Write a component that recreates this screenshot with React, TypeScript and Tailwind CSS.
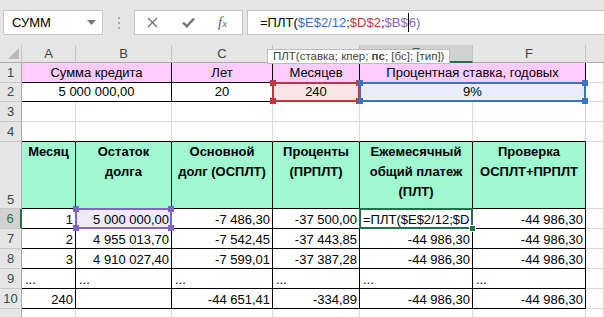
import React from "react";

type Al = "l" | "c" | "r";

function Cell({
  c = "",
  al = "r",
  v = "end",
  children,
  ov,
}: {
  c?: string;
  al?: Al;
  v?: "end" | "center";
  children?: React.ReactNode;
  ov?: React.ReactNode;
}) {
  const j =
    al === "l"
      ? "justify-start pl-[3px]"
      : al === "c"
      ? "justify-center"
      : "justify-end pr-[2px]";
  const va = v === "end" ? "items-end" : "items-center";
  return (
    <div className={`relative min-w-0 border-r border-b ${c}`}>
      <div className={`h-full w-full overflow-hidden whitespace-nowrap flex ${j} ${va} leading-[16px]`}>
        {children}
      </div>
      {ov}
    </div>
  );
}

function Box({ b, s, handles = true }: { b: string; s: string; handles?: boolean }) {
  return (
    <div className={`pointer-events-none absolute z-10 -left-[1px] -top-[1px] -right-[1px] -bottom-[1px] border-2 ${b}`}>
      {handles && (
        <>
          <span className={`absolute -left-[4px] -top-[4px] w-[6px] h-[6px] ${s}`} />
          <span className={`absolute -right-[4px] -top-[4px] w-[6px] h-[6px] ${s}`} />
          <span className={`absolute -left-[4px] -bottom-[4px] w-[6px] h-[6px] ${s}`} />
          <span className={`absolute -right-[4px] -bottom-[4px] w-[6px] h-[6px] ${s}`} />
        </>
      )}
    </div>
  );
}

function ActiveBox() {
  return (
    <div className="pointer-events-none absolute z-10 -left-[1px] -top-[1px] -right-[1px] -bottom-[1px] border-2 border-[#217346]">
      <span className="absolute -right-[5px] -bottom-[5px] w-[7px] h-[7px] bg-[#217346] border border-white" />
    </div>
  );
}

const CH = "bg-[#e6e6e6] text-[#444] border-r-[#c4c4c4] border-b-[#ababab]";
const RH = "bg-[#e6e6e6] text-[#444] border-r-[#ababab] border-b-[#c8c8c8]";
const GR = "border-[#d9d9d9]";
const BK = "border-black";
const PK = "bg-[#ffccff] border-black";
const MINT = "bg-[#a0f9d0]";

function ColHdr({ t, c = "" }: { t: string; c?: string }) {
  return (
    <Cell c={`${CH} ${c}`} al="c" v="center">
      {t}
    </Cell>
  );
}

function RowHdr({ t, c = "", v = "center" }: { t: string; c?: string; v?: "end" | "center" }) {
  return (
    <Cell c={`${RH} ${c}`} al="c" v={v}>
      {t}
    </Cell>
  );
}

function H5({ lines, c = "" }: { lines: string[]; c?: string }) {
  return (
    <div className={`relative min-w-0 border-r border-b border-black ${MINT} flex flex-col items-center font-bold leading-[20px] whitespace-nowrap overflow-hidden ${c}`}>
      {lines.map((l, i) => (
        <span key={i}>{l}</span>
      ))}
    </div>
  );
}

function Toolbar() {
  return (
    <div className="h-[45px] bg-[#e6e6e6] flex items-start pt-[10px]">
      <div className="ml-[3px] w-[100px] h-[25px] bg-white border border-[#c6c6c6] flex items-center pl-[8px] pr-[6px] text-[13px] text-black">
        <span className="flex-1">СУММ</span>
        <svg width="9" height="5" viewBox="0 0 9 5">
          <path d="M0 0 L9 0 L4.5 5 Z" fill="#777" />
        </svg>
      </div>
      <div className="w-[31px] h-[25px] flex flex-col items-center justify-center gap-[3px]">
        <span className="w-[2px] h-[2px] bg-[#a8a8a8]" />
        <span className="w-[2px] h-[2px] bg-[#a8a8a8]" />
        <span className="w-[2px] h-[2px] bg-[#a8a8a8]" />
      </div>
      <div className="w-[109px] h-[25px] bg-white border border-[#c6c6c6] flex items-center">
        <svg className="ml-[12px]" width="11" height="11" viewBox="0 0 11 11">
          <path d="M1 1 L10 10 M10 1 L1 10" stroke="#737373" strokeWidth="1.4" />
        </svg>
        <svg className="ml-[24px]" width="13" height="11" viewBox="0 0 13 11">
          <path d="M1 5.5 L4.8 9.3 L12 1.5" stroke="#737373" strokeWidth="2.4" fill="none" />
        </svg>
        <span className="ml-[23px] font-['Liberation_Serif',serif] italic text-[#666] text-[15px] leading-none">
          f<span className="text-[11px]">x</span>
        </span>
      </div>
      <div className="ml-[4px] flex-1 h-[25px] bg-white border border-r-0 border-[#c6c6c6] flex items-center pl-[12px] text-[13px] whitespace-nowrap">
        <span className="text-black">=ПЛТ(</span>
        <span className="text-[#3a6fc8]">$E$2/12</span>
        <span className="text-black">;</span>
        <span className="text-[#c8323f]">$D$2</span>
        <span className="text-black">;</span>
        <span className="text-[#8563c4]">$B$</span>
        <span className="inline-block w-px h-[19px] bg-black" />
        <span className="text-[#8563c4]">6)</span>
      </div>
    </div>
  );
}

function Sheet() {
  return (
    <div className="grid grid-cols-[22px_54px_96px_101px_87px_113px_113px_1fr] grid-rows-[18px_20px_19px_20px_20px_67px_20px_20px_20px_20px_20px_20px] text-[13px] text-black">
      {/* header row */}
      <div className={`relative border-r border-b ${CH}`}>
        <svg className="absolute right-[2px] bottom-[3px]" width="11" height="11" viewBox="0 0 11 11">
          <path d="M11 0 L11 11 L0 11 Z" fill="#b9b9b9" />
        </svg>
      </div>
      <ColHdr t="A" />
      <ColHdr t="B" />
      <ColHdr t="C" />
      <ColHdr t="D" />
      <ColHdr t="E" c="!bg-[#d2d2d2] !text-[#217346] border-b-2 !border-b-[#217346]" />
      <ColHdr t="F" />
      <ColHdr t="" c="border-r-0" />

      {/* row 1 */}
      <RowHdr t="1" />
      <Cell c={`col-span-2 ${PK}`} al="c" v="center">Сумма кредита</Cell>
      <Cell c={PK} al="c" v="center">Лет</Cell>
      <Cell c={PK} al="c" v="center">Месяцев</Cell>
      <Cell c={`col-span-2 ${PK}`} al="c" v="center">Процентная ставка, годовых</Cell>
      <Cell c={GR} />

      {/* row 2 */}
      <RowHdr t="2" />
      <Cell c={`col-span-2 ${BK}`} al="c" v="center">5 000 000,00</Cell>
      <Cell c={BK} al="c" v="center">20</Cell>
      <Cell
        c={`${BK} bg-[#f9e6e7]`}
        al="c"
        v="center"
        ov={<Box b="border-[#c4353f]" s="bg-[#c4353f]" />}
      >
        240
      </Cell>
      <Cell
        c={`col-span-2 ${BK} bg-[#e8eef9]`}
        al="c"
        v="center"
        ov={<Box b="border-[#3a72c8]" s="bg-[#3a72c8]" />}
      >
        9%
      </Cell>
      <Cell c={GR} />

      {/* row 3 */}
      <RowHdr t="3" />
      <Cell c={GR} />
      <Cell c={GR} />
      <Cell c={GR} />
      <Cell c={GR} />
      <Cell c={GR} />
      <Cell c={GR} />
      <Cell c={GR} />

      {/* row 4 */}
      <RowHdr t="4" />
      <Cell c="border-r-[#d9d9d9] border-b-black" />
      <Cell c="border-r-[#d9d9d9] border-b-black" />
      <Cell c="border-r-[#d9d9d9] border-b-black" />
      <Cell c="border-r-[#d9d9d9] border-b-black" />
      <Cell c="border-r-[#d9d9d9] border-b-black" />
      <Cell c="border-r-[#d9d9d9] border-b-black" />
      <Cell c={GR} />

      {/* row 5 */}
      <RowHdr t="5" v="end" />
      <H5 lines={["Месяц"]} />
      <H5 lines={["Остаток", "долга"]} />
      <H5 lines={["Основной", "долг (ОСПЛТ)"]} />
      <H5 lines={["Проценты", "(ПРПЛТ)"]} />
      <H5 lines={["Ежемесячный", "общий платеж", "(ПЛТ)"]} />
      <H5 lines={["Проверка", "ОСПЛТ+ПРПЛТ"]} />
      <Cell c={GR} />

      {/* row 6 */}
      <RowHdr t="6" c="!bg-[#d2d2d2] !text-[#217346] border-r-2 !border-r-[#217346]" />
      <Cell c={BK}>1</Cell>
      <Cell c={`${BK} bg-[#efeaf8]`} ov={<Box b="border-[#8563c4]" s="bg-[#8563c4]" />}>
        5 000 000,00
      </Cell>
      <Cell c={BK}>-7 486,30</Cell>
      <Cell c={BK}>-37 500,00</Cell>
      <Cell c={BK} al="l" ov={<ActiveBox />}>
        =ПЛТ($E$2/12;$D
      </Cell>
      <Cell c={BK}>-44 986,30</Cell>
      <Cell c={GR} />

      {/* row 7 */}
      <RowHdr t="7" />
      <Cell c={BK}>2</Cell>
      <Cell c={BK}>4 955 013,70</Cell>
      <Cell c={BK}>-7 542,45</Cell>
      <Cell c={BK}>-37 443,85</Cell>
      <Cell c={BK}>-44 986,30</Cell>
      <Cell c={BK}>-44 986,30</Cell>
      <Cell c={GR} />

      {/* row 8 */}
      <RowHdr t="8" />
      <Cell c={BK}>3</Cell>
      <Cell c={BK}>4 910 027,40</Cell>
      <Cell c={BK}>-7 599,01</Cell>
      <Cell c={BK}>-37 387,28</Cell>
      <Cell c={BK}>-44 986,30</Cell>
      <Cell c={BK}>-44 986,30</Cell>
      <Cell c={GR} />

      {/* row 9 */}
      <RowHdr t="9" />
      <Cell c={BK} al="l">...</Cell>
      <Cell c={BK} al="l">...</Cell>
      <Cell c={BK} al="l">...</Cell>
      <Cell c={BK} al="l">...</Cell>
      <Cell c={BK} al="l">...</Cell>
      <Cell c={BK} al="l">...</Cell>
      <Cell c={GR} />

      {/* row 10 */}
      <RowHdr t="10" />
      <Cell c={BK}>240</Cell>
      <Cell c={BK} />
      <Cell c={BK}>-44 651,41</Cell>
      <Cell c={BK}>-334,89</Cell>
      <Cell c={BK}>-44 986,30</Cell>
      <Cell c={BK}>-44 986,30</Cell>
      <Cell c={GR} />

      {/* row 11 */}
      <RowHdr t="" />
      <Cell c={GR} />
      <Cell c={GR} />
      <Cell c={GR} />
      <Cell c={GR} />
      <Cell c={GR} />
      <Cell c={GR} />
      <Cell c={GR} />
    </div>
  );
}

function Tooltip() {
  return (
    <div className="absolute z-20 left-[267px] top-[49px] h-[15px] px-[5px] bg-white border border-[#bcbcbc] flex items-center text-[11.5px] leading-none text-[#444] whitespace-nowrap">
      <span>
        ПЛТ(ставка; кпер; <b className="font-bold">пс</b>; [бс]; [тип])
      </span>
    </div>
  );
}

export default function App() {
  return (
    <div className="relative w-[604px] h-[317px] overflow-hidden bg-white font-['Liberation_Sans',Arial,sans-serif]">
      <Toolbar />
      <Sheet />
      <Tooltip />
    </div>
  );
}
